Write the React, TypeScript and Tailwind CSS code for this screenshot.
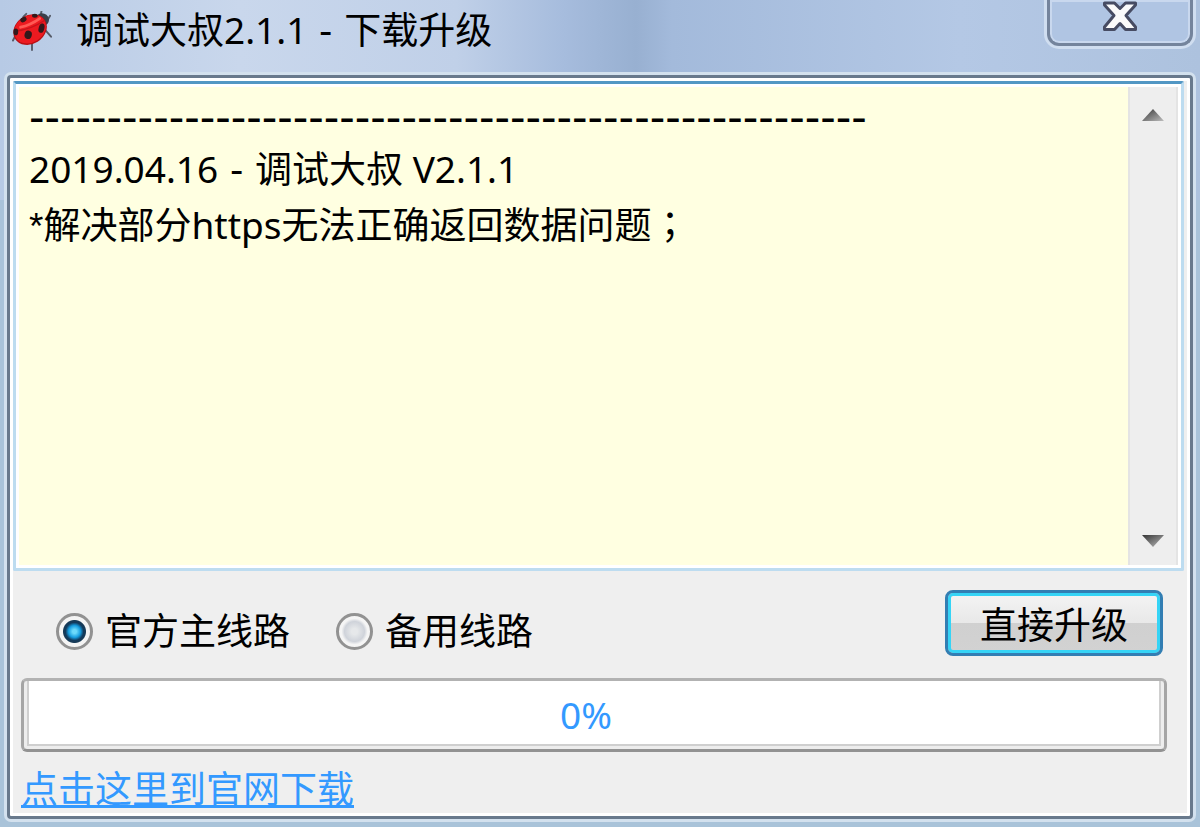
import { useState } from 'react';

const MIRRORS = [
  { id: 'main', label: '官方主线路' },
  { id: 'backup', label: '备用线路' },
];

const RULE = '-'.repeat(54);

/** The red ladybug used as the application icon. */
function LadybugIcon() {
  return (
    <svg viewBox="0 0 42 42" className="h-10 w-10 shrink-0" aria-hidden="true">
      <g stroke="#565b68" strokeWidth="2" strokeLinecap="round" fill="none">
        <path d="M4 25 1 31M21 34v7M35 20l6 7M30 5l1-5M37 10l3-5M12 6l3-3" />
      </g>
      <ellipse cx="32" cy="9" rx="7" ry="6.500" fill="#3b404a" transform="rotate(40 32 9)" />
      <ellipse cx="19" cy="19.500" rx="18.500" ry="15" fill="#b90f14" transform="rotate(-32 19 19.500)" />
      <ellipse cx="19" cy="19" rx="17.500" ry="14" fill="#ec1a20" transform="rotate(-32 19 19)" />
      <path d="M9 17Q19 15 29 8" fill="none" stroke="#ff5a54" strokeWidth="3" strokeLinecap="round" />
      <path d="M4 21Q19 20 34 10" fill="none" stroke="#c4141a" strokeWidth="1.500" />
      <g fill="#33181b">
        <ellipse cx="12" cy="9" rx="3.500" ry="2.500" transform="rotate(-30 12 9)" />
        <ellipse cx="24" cy="5" rx="3" ry="2" />
        <ellipse cx="4" cy="22" rx="2.500" ry="3.500" />
        <ellipse cx="17" cy="25" rx="3.800" ry="4.500" transform="rotate(15 17 25)" />
        <ellipse cx="31" cy="18" rx="3" ry="5" transform="rotate(15 31 18)" />
      </g>
    </svg>
  );
}

function CloseIcon() {
  return (
    <svg viewBox="0 0 36 32" className="h-8 w-9" aria-hidden="true">
      <path
        d="M2.500 3h10l5.500 5.500L23.500 3h10v2L24 15.500l9.500 11.500v2.500h-10L18 23.500l-5.500 6h-10V27L12 15.500 2.500 5z"
        fill="#fbfbfb"
        stroke="#474c63"
        strokeWidth="3"
        strokeLinejoin="round"
      />
    </svg>
  );
}

/** A hyphen with wide spaces round it, between a name and what follows. */
function Separator() {
  return <span className="font-['DejaVu_Sans',sans-serif] whitespace-pre">{' - '}</span>;
}

function TitleBar() {
  return (
    <header className="flex h-18 items-start justify-between pr-[7px] pl-3">
      <div className="flex items-center gap-6 pt-1">
        <LadybugIcon />
        <h1 className="text-[37px] leading-[52px] whitespace-nowrap">
          调试大叔2.1.1
          <Separator />
          下载升级
        </h1>
      </div>
      <button
        type="button"
        aria-label="关闭"
        className="flex h-[46px] w-[146px] items-start justify-center rounded-b-xl border-3 border-t-0 border-[#74849c] bg-[#b0c5e3] shadow-[0_0_0_3px_#d0def0,inset_0_0_0_2px_#c9d8ee]"
      >
        <CloseIcon />
      </button>
    </header>
  );
}

function ScrollBar() {
  return (
    <div className="flex w-[50px] shrink-0 flex-col justify-between border-x-2 border-[#e4e4e4] bg-[#eeeeee] pt-4 pb-3">
      <button type="button" aria-label="向上滚动" className="flex h-6 items-center justify-center">
        <svg viewBox="0 0 22 12" className="h-3 w-[22px]" aria-hidden="true">
          <defs>
            <linearGradient id="arrow" x1="0" y1="0" x2="1" y2="1">
              <stop offset="0" stopColor="#333" />
              <stop offset="1" stopColor="#bdbdbd" />
            </linearGradient>
          </defs>
          <path d="M0 12 11 0l11 12z" fill="url(#arrow)" />
        </svg>
      </button>
      <button type="button" aria-label="向下滚动" className="flex h-6 items-center justify-center">
        <svg viewBox="0 0 22 12" className="h-3 w-[22px]" aria-hidden="true">
          <path d="M0 0h22L11 12z" fill="url(#arrow)" />
        </svg>
      </button>
    </div>
  );
}

function ReleaseNotes() {
  return (
    <section
      aria-label="更新日志"
      className="mr-[3px] flex flex-1 rounded-xs border-3 border-[#bddcf0] border-t-[#5297c4] bg-white p-[3px]"
    >
      <div className="min-w-0 flex-1 overflow-hidden bg-[#ffffe1] pt-1 pl-2.5 text-[37px] leading-[52px] whitespace-nowrap">
        <p className="font-['DejaVu_Sans',sans-serif] text-[43px]">{RULE}</p>
        <p>
          2019.04.16
          <Separator />
          调试大叔 V2.1.1
        </p>
        <p>
          <span className="font-['Liberation_Sans',sans-serif]">*</span>
          解决部分https无法正确返回数据问题
          <span className="font-['Noto_Sans_CJK_TC',sans-serif]">；</span>
        </p>
      </div>
      <ScrollBar />
    </section>
  );
}

function MirrorPicker() {
  const [mirror, setMirror] = useState('main');

  return (
    <fieldset aria-label="下载线路" className="flex gap-[46px] pt-4">
      {MIRRORS.map(({ id, label }) => (
        <label key={id} className="flex items-center gap-3 text-[37px] leading-[50px] whitespace-nowrap">
          <input
            type="radio"
            name="mirror"
            value={id}
            checked={mirror === id}
            onChange={() => setMirror(id)}
            className="size-[37px] shrink-0 appearance-none rounded-full border-3 border-[#929292] bg-[radial-gradient(circle,#e6e8ea_0_3px,#cfd3da_10px,#f5f5f5_13px)] checked:bg-[radial-gradient(circle,#6bd9fb_0_2px,#159de0_6px,#123a5c_9px,#173a56_11px,#f4f4f4_12px)]"
          />
          {label}
        </label>
      ))}
    </fieldset>
  );
}

function ProgressBar({ value }: { value: number }) {
  return (
    <div
      role="progressbar"
      aria-label="下载进度"
      aria-valuenow={value}
      aria-valuemin={0}
      aria-valuemax={100}
      className="mr-5 ml-2 flex h-[74px] rounded-md border-3 border-[#a5a5a5] border-t-[#b2b2b2] border-b-[#929292] bg-[#ededed] px-[3px] pb-[3px]"
    >
      <div className="flex flex-1 items-center justify-center border-2 border-t-0 border-[#cfcfcf] bg-white pt-1 pr-4 text-[37px] leading-[52px] text-[#3399ff]">
        {value}%
      </div>
    </div>
  );
}

export default function App() {
  return (
    <div className="flex min-h-screen flex-col bg-[#a9c3d9] bg-[linear-gradient(90deg,#b7cae5_0%,#c9d7ec_20%,#c0d0e8_38%,#a6bcdd_47%,#98b0d1_53%,#a3badb_56%,#b4c8e5_80%,#adc2de_100%)] bg-[length:100%_200px] bg-no-repeat font-['Noto_Sans','Noto_Sans_CJK_SC',sans-serif] text-black">
      <TitleBar />
      <main className="mx-[7px] mt-[3px] mb-2 flex flex-1 flex-col rounded-sm border-3 border-[#68798c] bg-[#efefef] shadow-[0_0_0_3px_#d3e1ee,inset_0_0_0_3px_#fff]">
        <div className="flex flex-1 flex-col px-[3px] pt-[3px] pb-px">
          <ReleaseNotes />
          <div className="flex items-center justify-between pt-[19px] pr-6 pb-[22px] pl-[43px]">
            <MirrorPicker />
            <button
              type="button"
              className="h-[66px] w-[218px] rounded-lg border-3 border-[#327eb3] bg-[linear-gradient(#f4f4f4_0%,#e8e8e8_50%,#d0d0d0_50%,#d2d2d2_100%)] pt-1 text-[37px] leading-[52px] whitespace-nowrap shadow-[inset_0_0_0_3px_#35d4f6]"
            >
              直接升级
            </button>
          </div>
          <ProgressBar value={0} />
          <a
            href="#download"
            className="mt-[11px] ml-2 self-start text-[37px] leading-[52px] text-[#3399ff] underline decoration-3 underline-offset-2"
          >
            点击这里到官网下载
          </a>
        </div>
      </main>
    </div>
  );
}
